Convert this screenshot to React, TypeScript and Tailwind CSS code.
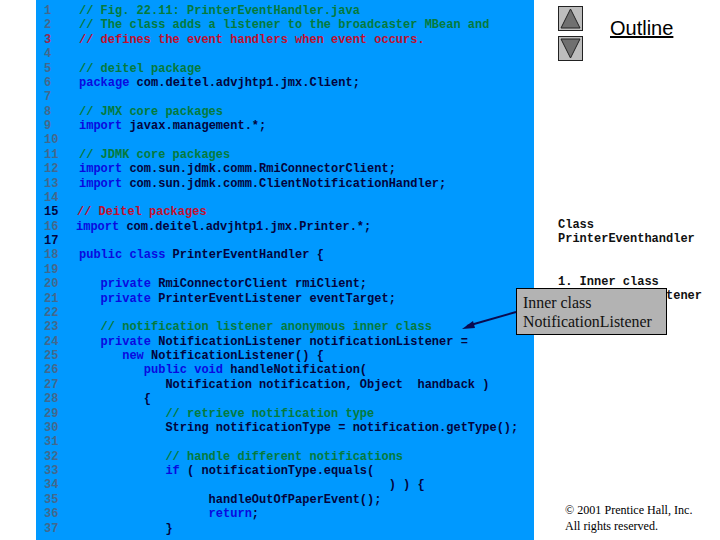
const G = "text-[#067a3c]";
const R = "text-[#c01030]";
const B = "text-[#0a0ae0]";
const K = "text-[#04043c]";

type Seg = [string, string];
type Line = { segs: Seg[]; num?: string; shift?: string };

const lines: Line[] = [
  { segs: [[G, "// Fig. 22.11: PrinterEventHandler.java"]] },
  { segs: [[G, "// The class adds a listener to the broadcaster MBean and"]] },
  { segs: [[R, "// defines the event handlers when event occurs."]], num: "text-[#9a2a50]" },
  { segs: [] },
  { segs: [[G, "// deitel package"]] },
  { segs: [[B, "package"], [K, " com.deitel.advjhtp1.jmx.Client;"]] },
  { segs: [] },
  { segs: [[G, "// JMX core packages"]] },
  { segs: [[B, "import"], [K, " javax.management.*;"]] },
  { segs: [] },
  { segs: [[G, "// JDMK core packages"]] },
  { segs: [[B, "import"], [K, " com.sun.jdmk.comm.RmiConnectorClient;"]] },
  { segs: [[B, "import"], [K, " com.sun.jdmk.comm.ClientNotificationHandler;"]] },
  { segs: [] },
  { segs: [[R, "// Deitel packages"]], num: "text-[#04043c]", shift: "-ml-[2px]" },
  { segs: [[B, "import"], [K, " com.deitel.advjhtp1.jmx.Printer.*;"]], shift: "-ml-[3px]" },
  { segs: [], num: "text-[#04043c]" },
  { segs: [[B, "public class"], [K, " PrinterEventHandler {"]] },
  { segs: [] },
  { segs: [[B, "   private"], [K, " RmiConnectorClient rmiClient;"]] },
  { segs: [[B, "   private"], [K, " PrinterEventListener eventTarget;"]] },
  { segs: [] },
  { segs: [[G, "   // notification listener anonymous inner class"]] },
  { segs: [[B, "   private"], [K, " NotificationListener notificationListener ="]] },
  { segs: [[B, "      new"], [K, " NotificationListener() {"]] },
  { segs: [[B, "         public void"], [K, " handleNotification("]] },
  { segs: [[K, "            Notification notification, Object  handback )"]] },
  { segs: [[K, "         {"]] },
  { segs: [[G, "            // retrieve notification type"]] },
  { segs: [[K, "            String notificationType = notification.getType();"]] },
  { segs: [] },
  { segs: [[G, "            // handle different notifications"]] },
  { segs: [[B, "            if"], [K, " ( notificationType.equals("]] },
  { segs: [[K, "                                           ) ) {"]] },
  { segs: [[K, "                  handleOutOfPaperEvent();"]] },
  { segs: [[B, "                  return"], [K, ";"]] },
  { segs: [[K, "            }"]] },
];

function Btn({ up }: { up?: boolean }) {
  return (
    <div className="w-[25px] h-[25px] border border-[#222] bg-[#bdbdbd] flex items-center justify-center">
      <svg width="23" height="23" viewBox="0 0 23 23">
        <polygon
          points={up ? "11.5,2 21,21 2,21" : "11.5,21 21,2 2,2"}
          fill="#707070"
          stroke="#222"
          strokeWidth="1"
        />
      </svg>
    </div>
  );
}

export default function App() {
  return (
    <div className="relative w-[720px] h-[540px] bg-white flex overflow-hidden font-['Liberation_Mono',monospace]">
      <div className="w-[36px] shrink-0" />
      <div className="w-[498px] shrink-0 h-full bg-[#0099ff] pt-[4px] text-[12px] leading-[14.39px] font-bold whitespace-pre">
        {lines.map((l, i) => (
          <div key={i} className="flex h-[14.39px]">
            <span className={`w-[43px] pl-[8px] shrink-0 ${l.num ?? "text-[#44688c]"}`}>{i + 1}</span>
            <span className={l.shift ?? ""}>
              {l.segs.map((s, j) => (
                <span key={j} className={s[0]}>{s[1]}</span>
              ))}
            </span>
          </div>
        ))}
      </div>
      <div className="flex-1 flex flex-col pl-[24px] pt-[6px]">
        <div className="flex">
          <div className="flex flex-col gap-[5px]">
            <Btn up />
            <Btn />
          </div>
          <div className="ml-[27px] mt-[9px] font-['Liberation_Sans',sans-serif] text-[20px] leading-[26px] underline text-black">
            Outline
          </div>
        </div>
        <div className="mt-[157px] text-[12px] leading-[14px] font-bold text-[#111]">
          <div>Class</div>
          <div>PrinterEventhandler</div>
          <div className="mt-[29px]">1. Inner class</div>
          <div>NotificationListener</div>
        </div>
        <div className="mt-auto mb-[6px] ml-[7px] font-['Liberation_Serif',serif] text-[12.1px] leading-[16px] text-black whitespace-nowrap">
          <div>© 2001 Prentice Hall, Inc.</div>
          <div>All rights reserved.</div>
        </div>
      </div>
      <div className="absolute left-[516px] top-[288px] w-[151px] h-[47px] border border-black bg-[#b3b3b3] pl-[6px] pt-[4px] font-['Liberation_Serif',serif] text-[15.9px] leading-[19px] text-[#111]">
        <div>Inner class</div>
        <div>NotificationListener</div>
      </div>
      <svg className="absolute left-[455px] top-[305px]" width="62" height="30" viewBox="0 0 62 30">
        <line x1="61" y1="7" x2="12" y2="21" stroke="#0a0a50" strokeWidth="2" />
        <polygon points="7,24 18,16 20,23" fill="#0a0a50" />
      </svg>
    </div>
  );
}
